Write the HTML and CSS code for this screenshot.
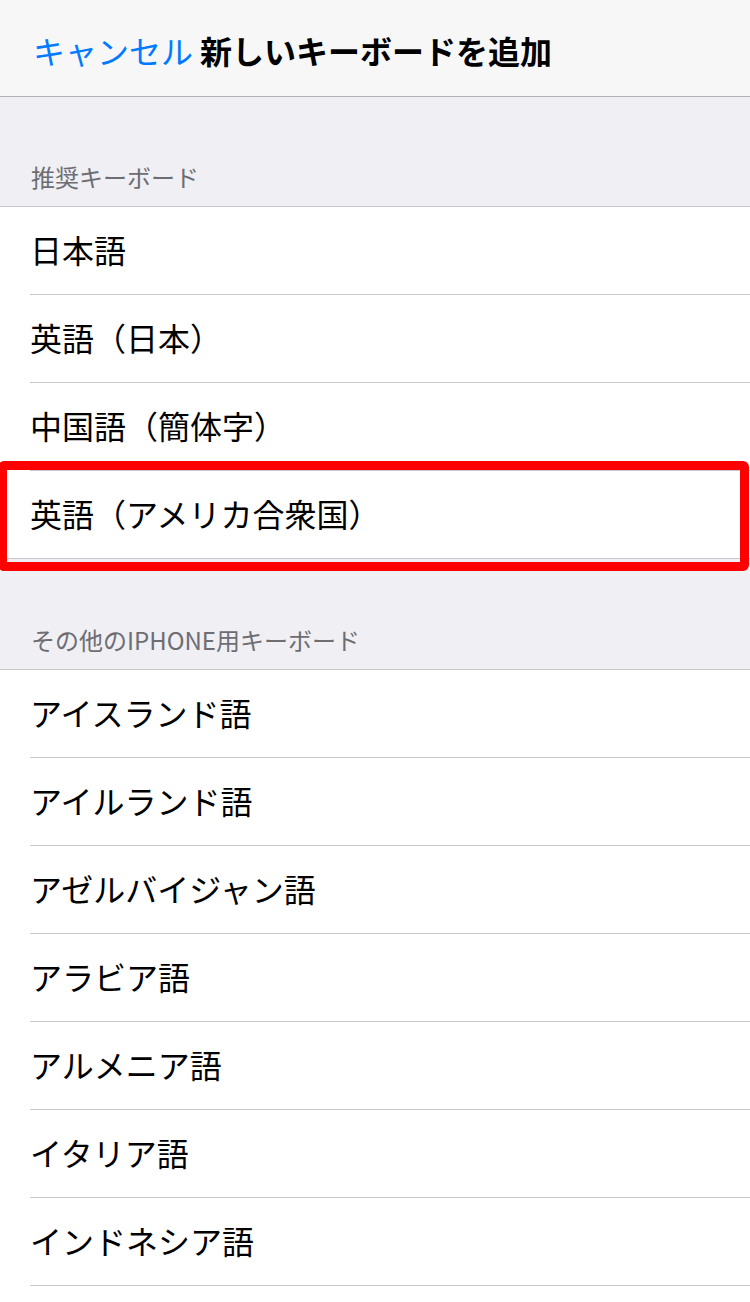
FILE: index.html
```html
<!DOCTYPE html>
<html lang="ja">
<head>
<meta charset="utf-8">
<title>新しいキーボードを追加</title>
<link rel="stylesheet" href="styles.css">
</head>
<body>
<header class="nav">
  <span class="cancel">キャンセル</span>
  <span class="title">新しいキーボードを追加</span>
</header>
<section class="group">
  <div class="group-title">推奨キーボード</div>
  <ul class="list">
    <li class="row"><div class="cell">日本語</div></li>
    <li class="row"><div class="cell">英語（日本）</div></li>
    <li class="row"><div class="cell">中国語（簡体字）</div></li>
    <li class="row row-last highlighted"><div class="cell">英語（アメリカ合衆国）</div><span class="highlight"></span></li>
  </ul>
</section>
<section class="group">
  <div class="group-title">その他のIPHONE用キーボード</div>
  <ul class="list list-open">
    <li class="row"><div class="cell">アイスランド語</div></li>
    <li class="row"><div class="cell">アイルランド語</div></li>
    <li class="row"><div class="cell">アゼルバイジャン語</div></li>
    <li class="row"><div class="cell">アラビア語</div></li>
    <li class="row"><div class="cell">アルメニア語</div></li>
    <li class="row"><div class="cell">イタリア語</div></li>
    <li class="row"><div class="cell">インドネシア語</div></li>
  </ul>
</section>
</body>
</html>
```

FILE: styles.css
```css
html, body {
  margin: 0;
  padding: 0;
}
body {
  width: 750px;
  height: 1302px;
  overflow: hidden;
  background: #efeff4;
  font-family: "Noto Sans CJK JP", "Noto Sans", sans-serif;
  -webkit-font-smoothing: antialiased;
}
.nav {
  box-sizing: border-box;
  background: #f7f7f7;
  border-bottom: 1px solid #b2b2b2;
  display: flex;
  align-items: center;
  gap: 7px;
  padding: 4px 0 0 33px;
  height: 97px;
  font-size: 32px;
}
.cancel {
  color: #007aff;
  font-weight: 400;
}
.title {
  color: #000;
  font-weight: 700;
}
.group-title {
  height: 109px;
  box-sizing: border-box;
  display: flex;
  align-items: flex-end;
  padding: 0 0 17px 31px;
  font-size: 24px;
  color: #6d6d72;
  line-height: 1;
}
.group + .group .group-title {
  height: 110px;
}
.list {
  list-style: none;
  margin: 0;
  padding: 0;
  background: #fff;
  border-top: 1px solid #c8c7cc;
}
.list-open {
  padding-bottom: 40px;
}
.row {
  position: relative;
  padding-left: 30px;
}
.cell {
  height: 87px;
  box-sizing: border-box;
  border-bottom: 1px solid #c8c7cc;
  height: 88px;
  display: flex;
  align-items: center;
  padding: 0 0 4px 0;
  font-size: 32px;
  color: #000;
}
.row-last {
  padding-left: 0;
}
.row-last .cell {
  padding-left: 30px;
}
.highlight {
  position: absolute;
  top: -10px;
  bottom: -12px;
  left: -2px;
  right: 1px;
  border: 9px solid #ff0000;
  border-radius: 6px;
  pointer-events: none;
}
```
